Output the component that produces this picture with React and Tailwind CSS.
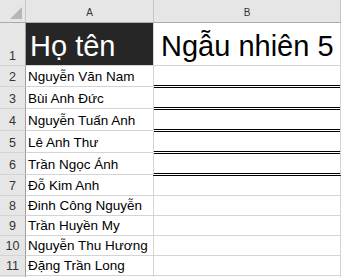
import React from "react";

const FONT = "font-['Liberation_Sans',Arial,sans-serif]";

// row number, name, row height incl. bottom gridline, double rule under column B
const ROWS = [
  { n: 2, name: "Nguyễn Văn Nam", h: "h-[21px]", bh: "h-[22px]", dbl: true },
  { n: 3, name: "Bùi Anh Đức", h: "h-[22px]", bh: "h-[23px]", dbl: true },
  { n: 4, name: "Nguyễn Tuấn Anh", h: "h-[22px]", bh: "h-[23px]", dbl: true },
  { n: 5, name: "Lê Anh Thư", h: "h-[22px]", bh: "h-[23px]", dbl: true },
  { n: 6, name: "Trần Ngọc Ánh", h: "h-[22px]", bh: "h-[23px]", dbl: true },
  { n: 7, name: "Đỗ Kim Anh", h: "h-[21px]" },
  { n: 8, name: "Đinh Công Nguyễn", h: "h-[20px]" },
  { n: 9, name: "Trần Huyền My", h: "h-[20px]" },
  { n: 10, name: "Nguyễn Thu Hương", h: "h-[20px]" },
  { n: 11, name: "Đặng Trần Long", h: "h-[20px]" },
];

function RowNum({ children, h }) {
  return (
    <div
      className={`${h} w-[26px] shrink-0 flex items-end justify-center pb-[2px] bg-[#e6e6e6] border-r border-b border-r-[#9f9f9f] border-b-[#d4d4d4] text-[12.5px] leading-[14px] text-[#333]`}
    >
      {children}
    </div>
  );
}

function BodyRow({ row }) {
  return (
    <div className={`flex ${row.h}`}>
      <RowNum h={row.h}>{row.n}</RowNum>
      <div className="w-[127px] shrink-0 flex items-end pl-[2px] pb-[2px] border-b border-[#d4d4d4] text-[13.5px] leading-[15px] text-black whitespace-nowrap">
        {row.name}
      </div>
      {row.dbl ? (
        <div
          className={`relative z-10 ${row.bh} w-[188px] shrink-0 border-l border-r border-l-[#d4d4d4] border-r-[#d4d4d4] border-b-[3px] border-double border-b-black`}
        />
      ) : (
        <div className="w-[188px] shrink-0 border-l border-r border-b border-[#d4d4d4]" />
      )}
    </div>
  );
}

export default function App() {
  return (
    <div className={`${FONT} w-[341px] h-[277px] overflow-hidden bg-white`}>
      {/* column letters */}
      <div className="flex h-[23px] bg-[#e6e6e6] border-b border-[#ababab]">
        <div className="w-[26px] shrink-0 border-r border-[#c6c6c6] relative">
          <svg width="25" height="22" className="absolute left-0 top-0">
            <polygon points="22,7 22,19 10,19" fill="#b6b6b6" />
          </svg>
        </div>
        <div className="w-[127px] shrink-0 flex items-end justify-center pb-[3px] text-[10px] leading-[12px] text-[#333]">
          A
        </div>
        <div className="w-[188px] shrink-0 flex items-end justify-center pb-[3px] border-l border-r border-[#c6c6c6] text-[10px] leading-[12px] text-[#333]">
          B
        </div>
      </div>

      {/* header row */}
      <div className="flex h-[43px]">
        <RowNum h="h-[43px]">1</RowNum>
        <div className="w-[127px] shrink-0 flex items-end pl-[4px] pb-[4px] bg-[#262626] border-b border-[#d4d4d4] text-[29px] leading-[29px] text-white whitespace-nowrap">
          Họ tên
        </div>
        <div className="w-[188px] shrink-0 flex items-end pl-[7px] pb-[4px] border-l border-r border-b border-[#d4d4d4] text-[29px] leading-[29px] text-black whitespace-nowrap">
          Ngẫu nhiên 5
        </div>
      </div>

      {ROWS.map((row) => (
        <BodyRow key={row.n} row={row} />
      ))}

      <div className="flex h-[20px]">
        <div className="w-[26px] shrink-0 bg-[#e6e6e6] border-r border-[#9f9f9f]" />
        <div className="w-[127px] shrink-0" />
        <div className="w-[188px] shrink-0 border-l border-r border-[#d4d4d4]" />
      </div>
    </div>
  );
}
